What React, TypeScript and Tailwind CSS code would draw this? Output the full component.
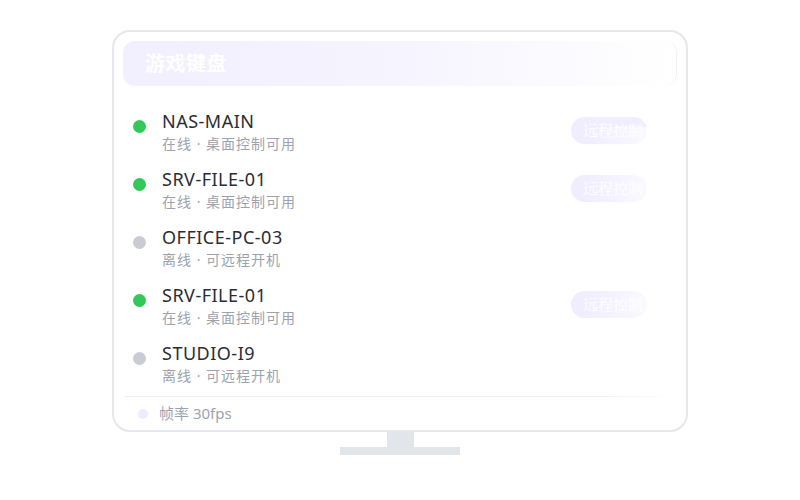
import React from "react";

type Device = { name: string; online: boolean };

const devices: Device[] = [
  { name: "NAS-MAIN", online: true },
  { name: "SRV-FILE-01", online: true },
  { name: "OFFICE-PC-03", online: false },
  { name: "SRV-FILE-01", online: true },
  { name: "STUDIO-I9", online: false },
];

export default function App() {
  return (
    <div
      className="w-[800px] h-[500px] bg-white flex flex-col items-center pt-[30px]"
      style={{ fontFamily: '"Noto Sans", "Noto Sans CJK SC", sans-serif' }}
    >
      <div className="relative w-[576px] h-[402px] rounded-[18px] border-2 border-[#e5e7eb] bg-white px-[9px] pt-[9px] flex flex-col overflow-hidden">
        <div className="h-[45px] shrink-0 rounded-[12px] bg-gradient-to-r from-[#f2effe] via-[#f6f4ff] to-white flex items-center justify-between pl-[22px] pr-[10px] border-r border-[#f0f0f3]">
          <span className="text-white text-[20px] font-bold tracking-[0.5px]">游戏键盘</span>
          <span className="text-white text-[14px]">设置</span>
        </div>
        <div className="mt-[17px] flex flex-col">
          {devices.map((d, i) => (
            <div key={i} className="h-[58px] flex items-center pl-[10px] pr-[30px]">
              <span
                className={
                  "w-[13px] h-[13px] rounded-full shrink-0 self-start mt-[17px] " +
                  (d.online ? "bg-[#34c759]" : "bg-[#c9ccd3]")
                }
              />
              <div className="ml-[16px] flex flex-col flex-1 mt-[0px]">
                <span className="text-[18px] leading-[24px] text-[#2a2d33] tracking-[0.5px]">{d.name}</span>
                <span className="text-[14px] leading-[22px] text-[#9ca3af] tracking-[1px]">
                  {d.online ? "在线 · 桌面控制可用" : "离线 · 可远程开机"}
                </span>
              </div>
              {d.online && (
                <span
                  className="w-[76px] h-[27px] rounded-full bg-[#f0edff] text-white text-[15px] flex items-center pl-[12px] mt-[-4px]"
                  style={{ fontFamily: '"Noto Serif CJK SC", "Noto Sans CJK SC", serif' }}
                >
                  远程控制
                </span>
              )}
            </div>
          ))}
        </div>
        <div className="mt-[3px] border-t border-[#eeeff2] flex items-center h-[34px] pl-[13px] mx-[2px]">
          <span className="w-[10px] h-[10px] rounded-full bg-[#efeafe]" />
          <span className="ml-[11px] text-[15px] text-[#9ca3af]">帧率 30fps</span>
        </div>
        <div className="absolute right-[10px] top-[95px] w-[90px] h-[300px] bg-gradient-to-r from-transparent to-white pointer-events-none" />
      </div>
      <div className="w-[27px] h-[15px] bg-[#e2e5e9]" />
      <div className="w-[120px] h-[8px] bg-[#e2e5e9]" />
    </div>
  );
}
